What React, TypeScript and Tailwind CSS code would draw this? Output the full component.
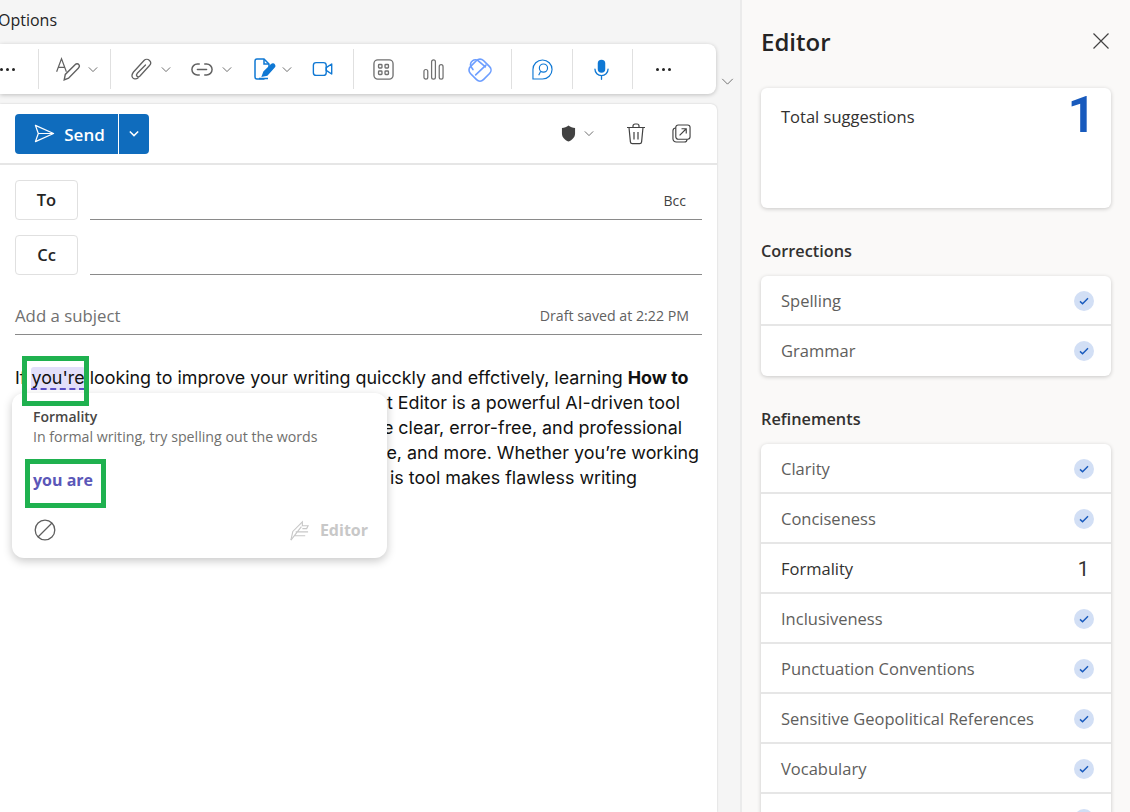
const ui = "font-['Open_Sans','Noto_Sans',sans-serif]";

function Sep({ className = '' }: { className?: string }) {
  return <span className={`h-[40px] w-px shrink-0 bg-[#e0e0e0] ${className}`} />;
}

function Caret({ className = '' }: { className?: string }) {
  return (
    <svg viewBox="0 0 12 8" className={`h-[7px] w-[10px] shrink-0 ${className}`} fill="none" stroke="#616161" strokeWidth="1.1">
      <path d="M1 1.5 6 6.5 11 1.5" />
    </svg>
  );
}

function Dots({ className = '' }: { className?: string }) {
  return (
    <span className={`flex shrink-0 gap-[3px] ${className}`}>
      <span className="h-[3px] w-[3px] rounded-full bg-[#242424]" />
      <span className="h-[3px] w-[3px] rounded-full bg-[#242424]" />
      <span className="h-[3px] w-[3px] rounded-full bg-[#242424]" />
    </span>
  );
}

function Toolbar() {
  return (
    <div className="flex items-center">
      <div className="flex h-[50px] w-[716px] shrink-0 items-center rounded-r-lg bg-white shadow-[0_1px_4px_rgba(0,0,0,0.22)]">
        <Dots />
        <Sep className="ml-[23px]" />
        <svg viewBox="0 0 24 24" className="ml-[16px] h-[26px] w-[26px] shrink-0" fill="none" stroke="#616161" strokeWidth="1.1">
          <path d="M1.5 14.5 6 2.5 10.5 14.5M3 10.5h6" />
          <path d="M8.5 22l1-5L18.5 8c1.2-1.1 2.7-1 3.5 0s.5 2.3-.5 3.3L12.5 20.5z" strokeWidth="1.3" />
        </svg>
        <Caret className="ml-[7px]" />
        <Sep className="ml-[12px]" />
        <svg viewBox="0 0 24 24" className="ml-[19px] h-[24px] w-[24px] shrink-0" fill="none" stroke="#616161" strokeWidth="1.3" strokeLinecap="round">
          <path d="M8 21c-2 1.5-4.5 1-5.5-.5S2 17 3.5 15L14 3.5c1.5-1.5 4-1.5 5.5 0s1.5 3.5 0 5L10 19c-1 1-2.3 1-3 .2s-.6-2 .3-3L15.5 8" />
        </svg>
        <Caret className="ml-[7px]" />
        <svg viewBox="0 0 24 16" className="ml-[20px] h-[15px] w-[22px] shrink-0" fill="none" stroke="#616161" strokeWidth="1.6" strokeLinecap="round">
          <path d="M9 2H7a6 6 0 0 0 0 12h2M15 2h2a6 6 0 0 1 0 12h-2M7 8h10" />
        </svg>
        <Caret className="ml-[9px]" />
        <svg viewBox="0 0 24 24" className="ml-[20px] h-[24px] w-[24px] shrink-0" fill="none" stroke="#0f78d4" strokeWidth="1.5">
          <path d="M12.5 22H5a2 2 0 0 1-2-2V4a2 2 0 0 1 2-2h7l5 5v3" />
          <path d="M12 2v5h5M7 21.5h9" />
          <path d="M10.5 19 12 15l7.5-7.5c1-.8 2.2-.6 2.8.3s.4 1.8-.3 2.5L15 18z" fill="#0f78d4" />
        </svg>
        <Caret className="ml-[6px]" />
        <svg viewBox="0 0 24 20" className="ml-[20px] h-[20px] w-[22px] shrink-0" fill="none" stroke="#0f78d4" strokeWidth="1.5" strokeLinejoin="round">
          <rect x="1.5" y="3" width="14" height="14" rx="3" />
          <path d="M15.5 8.5 21.5 4.5v11l-6-4z" />
        </svg>
        <Sep className="ml-[19px]" />
        <svg viewBox="0 0 22 22" className="ml-[19px] h-[21px] w-[21px] shrink-0" fill="none" stroke="#707070" strokeWidth="1.4">
          <rect x="1" y="1" width="20" height="20" rx="4" />
          <rect x="5.8" y="5.8" width="3.6" height="3.6" rx="0.8" />
          <rect x="12.6" y="5.8" width="3.6" height="3.6" rx="0.8" />
          <rect x="5.8" y="12.6" width="3.6" height="3.6" rx="0.8" />
          <rect x="12.6" y="12.6" width="3.6" height="3.6" rx="0.8" />
        </svg>
        <svg viewBox="0 0 22 22" className="ml-[29px] h-[21px] w-[21px] shrink-0" fill="none" stroke="#707070" strokeWidth="1.3">
          <rect x="1" y="11" width="4" height="10" rx="2" />
          <rect x="9" y="1" width="4" height="20" rx="2" />
          <rect x="17" y="6" width="4" height="15" rx="2" />
        </svg>
        <svg viewBox="0 0 24 24" className="ml-[23px] h-[26px] w-[26px] shrink-0" fill="none" stroke="#6d9eff" strokeWidth="1.5" strokeLinecap="round">
          <rect x="3.5" y="4.5" width="17" height="17" rx="4.5" transform="rotate(45 12 13)" />
          <path d="M8 17.5 17.5 8.5" />
          <path d="M5.5 12.5 4.5 11a4.2 4.2 0 0 1 .5-6.5 4.5 4.5 0 0 1 6 .5l6 5" />
        </svg>
        <Sep className="ml-[18px]" />
        <svg viewBox="0 0 22 22" className="ml-[20px] h-[21px] w-[21px] shrink-0" fill="none" stroke="#0f78d4" strokeWidth="1.2">
          <path d="M1 21V11a10 10 0 1 1 10 10z" />
          <circle cx="12" cy="9.5" r="4.3" />
          <path d="M9 13 7 17" />
        </svg>
        <Sep className="ml-[19px]" />
        <svg viewBox="0 0 16 22" className="ml-[21px] h-[21px] w-[15px] shrink-0" fill="none">
          <rect x="4" y="0.5" width="8" height="14" rx="4" fill="#0f78d4" />
          <path d="M1 10.5a7 7 0 0 0 14 0M8 17.5V21.5" stroke="#0f78d4" strokeWidth="1.4" strokeLinecap="round" />
        </svg>
        <Sep className="ml-[23px]" />
        <Dots className="ml-[23px]" />
      </div>
      <svg viewBox="0 0 14 8" className="ml-[5px] mt-[24px] h-[7px] w-[13px] shrink-0" fill="none" stroke="#616161" strokeWidth="1">
        <path d="M1 1 7 7 13 1" />
      </svg>
    </div>
  );
}

function RecipientRow({ label, bcc }: { label: string; bcc?: boolean }) {
  return (
    <div className="flex h-[40px] items-stretch">
      <button className="flex w-[63px] shrink-0 items-center justify-center rounded border border-[#e0e0e0] bg-white pt-[1px] text-[16.5px] font-semibold text-[#242424]">
        {label}
      </button>
      <div className="ml-3 flex flex-1 items-center justify-end border-b border-[#8a8a8a] pr-[16px] pt-[2px] text-[14px] text-[#424242]">
        {bcc && 'Bcc'}
      </div>
    </div>
  );
}

function Composer() {
  return (
    <div className={`relative mt-[10px] h-[708px] w-[717px] rounded-tr-md bg-white shadow-[0_0_2px_rgba(0,0,0,0.2)] ${ui}`}>
      <div className="flex h-[61px] items-center border-b-2 border-[#e6e6e6] pl-[15px] pr-[26px]">
        <div className="flex h-[40px] w-[134px] items-stretch rounded bg-[#0f6cbd] text-white">
          <div className="flex w-[103px] items-center justify-center gap-[9px] pl-[6px]">
            <svg viewBox="0 0 22 20" className="h-[21px] w-[21px] shrink-0" fill="none" stroke="#fff" strokeWidth="1.3" strokeLinejoin="round">
              <path d="M1.5 1.5 20.5 10 1.5 18.5 4.5 10zM4.5 10h16" />
            </svg>
            <span className="pt-[2px] text-[17px] font-semibold">Send</span>
          </div>
          <div className="flex flex-1 items-center justify-center border-l border-white">
            <svg viewBox="0 0 12 8" className="h-[7px] w-[10px]" fill="none" stroke="#fff" strokeWidth="1.8">
              <path d="M1 1.5 6 6.5 11 1.5" />
            </svg>
          </div>
        </div>
        <div className="ml-auto flex items-center">
          <svg viewBox="0 0 16 18" className="h-[17px] w-[15px]" fill="#424242">
            <path d="M8 0.5c2 1.7 4.4 2.4 7 2.5v6c0 4-3 7-7 8.5C4 16 1 13 1 9V3c2.6-.1 5-.8 7-2.5z" />
          </svg>
          <Caret className="ml-[8px]" />
          <svg viewBox="0 0 20 22" className="ml-[32px] h-[22px] w-[20px]" fill="none" stroke="#424242" strokeWidth="1.2">
            <path d="M1 4.5h18M7 4.5V3a2 2 0 0 1 2-2h2a2 2 0 0 1 2 2v1.5M3 4.5l1.4 14.4a2 2 0 0 0 2 1.8h7.2a2 2 0 0 0 2-1.8L17 4.5" />
            <path d="M8 9v7.5M12 9v7.5" />
          </svg>
          <svg viewBox="0 0 20 20" className="ml-[26px] h-[19px] w-[19px]" fill="none" stroke="#424242" strokeWidth="1.2">
            <rect x="4" y="1" width="15" height="15" rx="2.5" />
            <path d="M4 4.2A3 3 0 0 0 1 7v8.5A3.5 3.5 0 0 0 4.5 19H13a3 3 0 0 0 2.8-3" />
            <path d="M8 12l7-7M10 5h5v5" />
          </svg>
        </div>
      </div>
      <div className="mx-[15px] mt-[15px] flex flex-col gap-[15px]">
        <RecipientRow label="To" bcc />
        <RecipientRow label="Cc" />
      </div>
      <div className="mx-[15px] mt-[29px] flex h-[31px] items-start justify-between border-b border-[#8a8a8a]">
        <span className="text-[16.8px] leading-[24px] text-[#707070]">Add a subject</span>
        <span className="mr-[13px] mt-[1px] text-[14.2px] text-[#616161]">Draft saved at 2:22 PM</span>
      </div>
      <Body />
      <Popover />
    </div>
  );
}

// only the parts of each line that the suggestion card leaves uncovered
function Body() {
  return (
    <div className="ml-[15px] mt-[30px] whitespace-nowrap font-['Inter',sans-serif] text-[17.87px] leading-[25px] text-[#111]">
      <div>
        If{' '}
        <span className="rounded-t-[3px] border-b-2 border-dashed border-[#5b4fc8] bg-[#e3dffa]">you're</span>{' '}
        looking to improve your writing quicckly and effctively, learning <b>How to</b>
      </div>
      <div className="w-[665px] text-right">t Editor is a powerful AI-driven tool</div>
      <div className="w-[667px] text-right">e clear, error-free, and professional</div>
      <div className="w-[684px] text-right">e, and more. Whether you’re working</div>
      <div className="w-[622px] text-right">is tool makes flawless writing</div>
    </div>
  );
}

function Popover() {
  return (
    <>
      <div className="absolute left-[12px] top-[289px] flex h-[165px] w-[375px] flex-col rounded-xl bg-white pl-[21px] pr-[19px] shadow-[0_3px_10px_rgba(0,0,0,0.22)]">
        <div className="mt-[14px] text-[14px] font-semibold leading-[20px] text-[#484644]">Formality</div>
        <div className="text-[14.2px] leading-[20px] text-[#70706e]">In formal writing, try spelling out the words</div>
        <div className="mt-[22px] text-[16px] font-bold leading-[22px] text-[#5b57b8]">you are</div>
        <div className="mb-[16px] mt-auto flex items-center justify-between">
          <svg viewBox="0 0 22 22" className="ml-[1px] h-[22px] w-[22px]" fill="none" stroke="#5f5f5f" strokeWidth="1.3">
            <circle cx="11" cy="11" r="9.8" />
            <path d="M4 18 18 4" />
          </svg>
          <div className="flex items-center gap-[10px]">
            <svg viewBox="0 0 22 22" className="h-[21px] w-[21px]" fill="none" stroke="#c8c8c8" strokeWidth="1.2">
              <path d="M2 21 4 12 14 2v4h6l-1.5 3H14" />
              <path d="M2 21 13 7M7 12.5h13M6 16.5h11" />
            </svg>
            <span className="text-[16px] font-bold text-[#c8c8c8]">Editor</span>
          </div>
        </div>
      </div>
      <div className="absolute left-[22px] top-[252px] h-[50px] w-[67px] border-[5px] border-[#1fb14f]" />
      <div className="absolute left-[25px] top-[355px] h-[49px] w-[81px] border-[5px] border-[#1fb14f]" />
    </>
  );
}

function Row({ label, count, active }: { label: string; count?: number; active?: boolean }) {
  return (
    <div className="flex h-[50px] shrink-0 items-center justify-between border-b-2 border-[#e6e6e6] pl-[20px] pr-[17px] pt-[2px] last:border-b-0 last:pt-0">
      <span className={`text-[16.5px] leading-[26px] ${active ? 'text-[#323130]' : 'text-[#605e5c]'}`}>{label}</span>
      {count ? (
        <span className="mr-[5px] font-['Roboto',sans-serif] text-[20px] text-[#323130]">{count}</span>
      ) : (
        <span className="flex h-[20px] w-[20px] items-center justify-center rounded-full bg-[#d2dff5]">
          <svg viewBox="0 0 12 10" className="h-[8px] w-[10px]" fill="none" stroke="#185abd" strokeWidth="1.8">
            <path d="M1 5.5 4.2 8.5 11 1.5" />
          </svg>
        </span>
      )}
    </div>
  );
}

const corrections = ['Spelling', 'Grammar'];
const refinements = [
  'Clarity',
  'Conciseness',
  'Formality',
  'Inclusiveness',
  'Punctuation Conventions',
  'Sensitive Geopolitical References',
  'Vocabulary',
  '',
];

function EditorPane() {
  return (
    <div className={`ml-[23px] h-[812px] flex-1 overflow-hidden border-l-2 border-[#ebebeb] bg-[#faf9f8] px-[19px] ${ui}`}>
      <div className="flex h-[88px] items-start justify-between">
        <h1 className="mt-[23px] text-[24px] font-semibold leading-[38px] text-[#242424]">Editor</h1>
        <svg viewBox="0 0 16 16" className="mr-[2px] mt-[33px] h-[16px] w-[16px]" fill="none" stroke="#424242" strokeWidth="1.2">
          <path d="M0.5 0.5 15.5 15.5M15.5 0.5 0.5 15.5" />
        </svg>
      </div>
      <div className="flex h-[120px] items-start justify-between rounded-md bg-white pl-[20px] pr-[21px] shadow-[0_1px_4px_rgba(0,0,0,0.2)]">
        <span className="mt-[17px] text-[16.5px] leading-[24px] text-[#323130]">Total suggestions</span>
        <span className="mr-[-6px] mt-[-1px] font-['Roboto',sans-serif] text-[50px] font-semibold leading-[56px] text-[#185abd]">1</span>
      </div>
      <h2 className="mt-[31px] text-[16.3px] font-semibold leading-[24px] text-[#323130]">Corrections</h2>
      <div className="mt-[13px] flex flex-col rounded-md bg-white shadow-[0_1px_4px_rgba(0,0,0,0.2)]">
        {corrections.map((c) => (
          <Row key={c} label={c} />
        ))}
      </div>
      <h2 className="mt-[31px] text-[16.3px] font-semibold leading-[24px] text-[#323130]">Refinements</h2>
      <div className="mt-[13px] flex flex-col rounded-md bg-white shadow-[0_1px_4px_rgba(0,0,0,0.2)]">
        {refinements.map((r, i) => (
          <Row key={i} label={r} count={r === 'Formality' ? 1 : undefined} active={r === 'Formality'} />
        ))}
      </div>
    </div>
  );
}

export default function App() {
  return (
    <div className="flex h-[812px] w-[1130px] overflow-hidden bg-[#f5f5f5]">
      <div className="w-[717px] shrink-0">
        <div className={`-ml-[2px] h-[44px] pt-[8px] text-[16px] leading-[24px] text-[#242424] ${ui}`}>Options</div>
        <Toolbar />
        <Composer />
      </div>
      <EditorPane />
    </div>
  );
}
